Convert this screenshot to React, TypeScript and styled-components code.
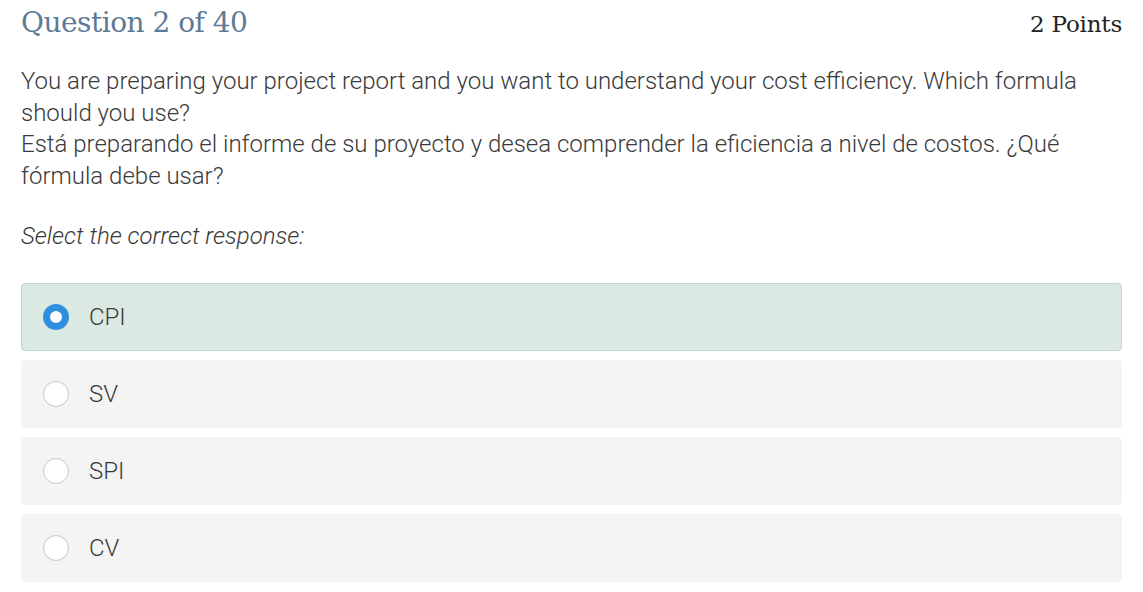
import React, { useState } from "react";
import styled, { createGlobalStyle } from "styled-components";

const GlobalStyle = createGlobalStyle`
  html, body {
    margin: 0;
    padding: 0;
    background: #ffffff;
  }
  body {
    font-family: Roboto, "Noto Sans", sans-serif;
  }
`;

const options = ["CPI", "SV", "SPI", "CV"];

const Page = styled.div`
  padding: 6px 21px 0 21px;
`;

const Header = styled.div`
  display: flex;
  justify-content: space-between;
  align-items: baseline;
  height: 40px;
`;

const Title = styled.h1`
  margin: 0;
  font-family: "DejaVu Serif", "Liberation Serif", serif;
  font-weight: normal;
  font-size: 28px;
  letter-spacing: -0.5px;
  color: #5b7b97;
`;

const Points = styled.span`
  font-family: "DejaVu Serif", "Liberation Serif", serif;
  font-size: 23px;
  letter-spacing: -0.2px;
  color: #222;
`;

const Prompt = styled.div`
  margin-top: 20px;
  font-size: 24px;
  font-weight: 300;
  line-height: 31.5px;
  color: #3a3a3a;
`;

const Instruction = styled.div`
  margin-top: 29px;
  font-size: 24px;
  font-weight: 300;
  font-style: italic;
  line-height: 31.5px;
  color: #3a3a3a;
`;

const OptionList = styled.div`
  margin-top: 30px;
  display: flex;
  flex-direction: column;
  gap: 9px;
`;

const OptionRow = styled.label<{ selected: boolean }>`
  display: flex;
  align-items: center;
  height: 68px;
  box-sizing: border-box;
  padding-left: 21px;
  border-radius: 4px;
  border: 1px solid ${(p) => (p.selected ? "#c3d5cd" : "#f4f4f4")};
  background: ${(p) => (p.selected ? "#dbe9e3" : "#f4f4f4")};
  cursor: pointer;
`;

const Radio = styled.span<{ selected: boolean }>`
  width: 26px;
  height: 26px;
  box-sizing: border-box;
  border-radius: 50%;
  background: #ffffff;
  border: ${(p) => (p.selected ? "7px solid #2e8fde" : "1px solid #c6c6c6")};
  flex-shrink: 0;
`;

const OptionText = styled.span`
  margin-left: 20px;
  font-size: 24px;
  font-weight: 300;
  color: #3a3a3a;
`;

const App: React.FC = () => {
  const [selected, setSelected] = useState(0);

  return (
    <>
      <GlobalStyle />
      <Page>
        <Header>
          <Title>Question 2 of 40</Title>
          <Points>2 Points</Points>
        </Header>
        <Prompt>
          You are preparing your project report and you want to understand your cost efficiency. Which formula
          should you use?
          <br />
          Está preparando el informe de su proyecto y desea comprender la eficiencia a nivel de costos. ¿Qué
          fórmula debe usar?
        </Prompt>
        <Instruction>Select the correct response:</Instruction>
        <OptionList>
          {options.map((opt, i) => (
            <OptionRow key={opt} selected={selected === i} onClick={() => setSelected(i)}>
              <Radio selected={selected === i} />
              <OptionText>{opt}</OptionText>
            </OptionRow>
          ))}
        </OptionList>
      </Page>
    </>
  );
};

export default App;
